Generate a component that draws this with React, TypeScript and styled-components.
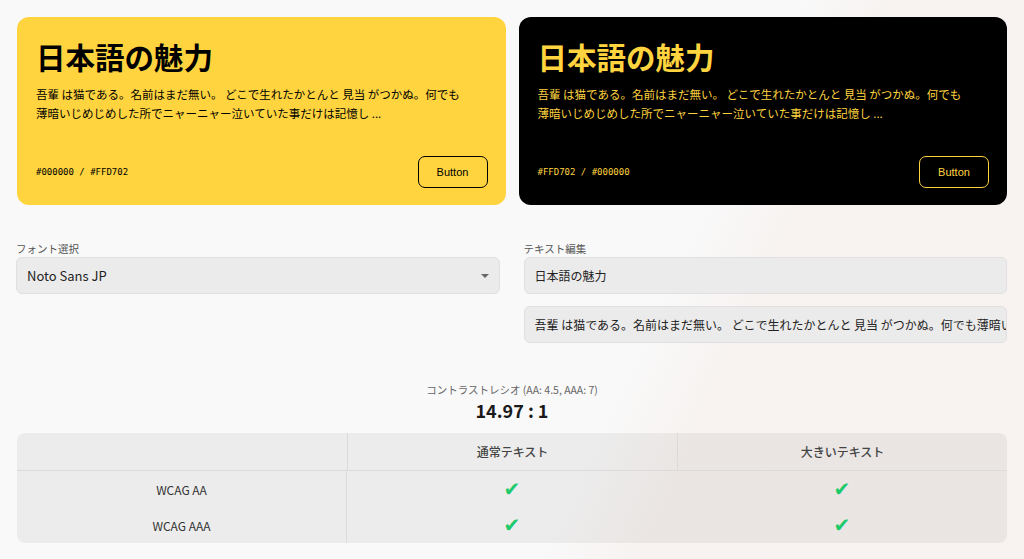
import styled, { createGlobalStyle } from "styled-components";

const GlobalStyle = createGlobalStyle`
  html, body {
    margin: 0;
    padding: 0;
  }
  body {
    font-family: "Noto Sans CJK JP", "Noto Sans", sans-serif;
    color: #222;
    background: #f9f9f9;
  }
`;

const YELLOW = "#FFD43F";
const BLACK = "#000000";

const Page = styled.div`
  position: relative;
  min-height: 559px;
  box-sizing: border-box;
  padding: 17px 17px 0 17px;
  overflow: hidden;
  background:
    linear-gradient(115deg, rgba(249, 249, 249, 0) 62%, rgba(247, 242, 240, 0.9) 70%),
    #f9f9f9;
`;

const CardRow = styled.div`
  display: grid;
  grid-template-columns: minmax(0, 1fr) minmax(0, 1fr);
  gap: 13px;
`;

const Card = styled.div<{ $bg: string; $fg: string }>`
  display: flex;
  flex-direction: column;
  height: 188px;
  box-sizing: border-box;
  padding: 20px 18px 17px 19px;
  border-radius: 12px;
  background: ${(p) => p.$bg};
  color: ${(p) => p.$fg};
`;

const Title = styled.h1`
  margin: 0 0 10px 0;
  font-size: 29.5px;
  line-height: 38px;
  font-weight: 700;
`;

const Body = styled.p`
  margin: 0;
  font-size: 11.5px;
  line-height: 19px;
  font-weight: 400;
`;

const Footer = styled.div`
  margin-top: auto;
  display: flex;
  align-items: center;
  justify-content: space-between;
`;

const Hex = styled.span`
  font-family: "DejaVu Sans Mono", "Liberation Mono", monospace;
  font-size: 9px;
  font-weight: 400;
`;

const CardButton = styled.button<{ $fg: string }>`
  width: 70px;
  height: 32px;
  border-radius: 7px;
  border: 1px solid ${(p) => p.$fg};
  background: transparent;
  color: ${(p) => p.$fg};
  font-family: "Liberation Sans", Arial, sans-serif;
  font-size: 11px;
  cursor: pointer;
`;

const FormRow = styled.div`
  display: grid;
  grid-template-columns: minmax(0, 1fr) minmax(0, 1fr);
  gap: 24px;
  margin-top: 37px;
  margin-left: -1px;
`;

const Field = styled.div`
  display: flex;
  flex-direction: column;
  gap: 12px;
  min-width: 0;
`;

const Label = styled.label`
  display: block;
  font-size: 10.5px;
  line-height: 14px;
  color: #555;
  margin-bottom: -11px;
`;

const Box = styled.div<{ $size?: number }>`
  position: relative;
  height: 37px;
  box-sizing: border-box;
  display: flex;
  align-items: center;
  padding: 0 10px;
  border: 1px solid #e1dfdf;
  border-radius: 6px;
  background: #ecebeb;
  font-size: ${(p) => p.$size ?? 12}px;
  color: #222;
  white-space: nowrap;
  overflow: hidden;
`;

const Caret = styled.span`
  position: absolute;
  right: 10px;
  top: 16px;
  width: 0;
  height: 0;
  border-left: 4px solid transparent;
  border-right: 4px solid transparent;
  border-top: 4px solid #666;
`;

const Ratio = styled.div`
  margin-top: 40px;
  text-align: center;
`;

const RatioLabel = styled.div`
  font-size: 10.5px;
  line-height: 14px;
  color: #666;
`;

const RatioValue = styled.div`
  margin-top: 1px;
  font-size: 18px;
  line-height: 24px;
  font-weight: 700;
  color: #1a1a1a;
`;

const Table = styled.table`
  width: 100%;
  margin-top: 11px;
  border-collapse: separate;
  border-spacing: 0;
  table-layout: fixed;
  background: rgba(0, 0, 0, 0.05);
  border-radius: 8px;
  overflow: hidden;
`;

const Th = styled.th`
  height: 37px;
  padding: 0;
  font-size: 12px;
  font-weight: 500;
  color: #444;
  border-bottom: 1px solid #dcdbdb;
  & + & {
    border-left: 1px solid #dcdbdb;
  }
`;

const RowHead = styled.td`
  height: 36px;
  padding: 0;
  text-align: center;
  font-size: 12px;
  color: #333;
  border-right: 1px solid #dcdbdb;
`;

const Td = styled.td`
  padding: 0;
  text-align: center;
`;

const Check = styled.span`
  color: #1fca6c;
  font-family: "DejaVu Sans", sans-serif;
  font-size: 20px;
  line-height: 20px;
`;

const text =
  "吾輩 は猫である。名前はまだ無い。 どこで生れたかとんと 見当 がつかぬ。何でも薄暗いじめじめした所でニャーニャー泣いていた事だけは記憶し ...";

const cards = [
  { bg: YELLOW, fg: BLACK, hex: "#000000 / #FFD702" },
  { bg: BLACK, fg: YELLOW, hex: "#FFD702 / #000000" },
];

export default function App() {
  return (
    <Page>
      <GlobalStyle />
      <CardRow>
        {cards.map((c) => (
          <Card key={c.hex} $bg={c.bg} $fg={c.fg}>
            <Title>日本語の魅力</Title>
            <Body>
              吾輩 は猫である。名前はまだ無い。 どこで生れたかとんと 見当 がつかぬ。何でも
              <br />
              薄暗いじめじめした所でニャーニャー泣いていた事だけは記憶し ...
            </Body>
            <Footer>
              <Hex>{c.hex}</Hex>
              <CardButton $fg={c.fg}>Button</CardButton>
            </Footer>
          </Card>
        ))}
      </CardRow>

      <FormRow>
        <Field>
          <Label>フォント選択</Label>
          <Box $size={13}>
            Noto Sans JP
            <Caret />
          </Box>
        </Field>
        <Field>
          <Label>テキスト編集</Label>
          <Box>日本語の魅力</Box>
          <Box>{text}</Box>
        </Field>
      </FormRow>

      <Ratio>
        <RatioLabel>コントラストレシオ (AA: 4.5, AAA: 7)</RatioLabel>
        <RatioValue>14.97 : 1</RatioValue>
      </Ratio>

      <Table>
        <thead>
          <tr>
            <Th />
            <Th>通常テキスト</Th>
            <Th>大きいテキスト</Th>
          </tr>
        </thead>
        <tbody>
          {["WCAG AA", "WCAG AAA"].map((level) => (
            <tr key={level}>
              <RowHead>{level}</RowHead>
              <Td>
                <Check>✔</Check>
              </Td>
              <Td>
                <Check>✔</Check>
              </Td>
            </tr>
          ))}
        </tbody>
      </Table>
    </Page>
  );
}
